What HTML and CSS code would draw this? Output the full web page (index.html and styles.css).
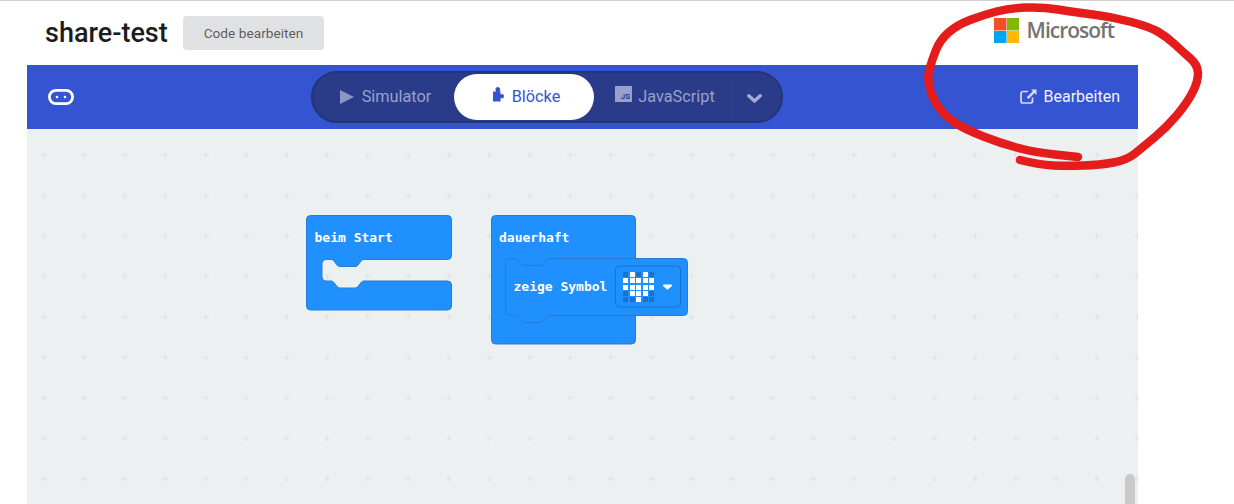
FILE: index.html
```html
<!DOCTYPE html>
<html lang="de">
<head>
<meta charset="utf-8">
<title>share-test</title>
<link rel="stylesheet" href="styles.css">
</head>
<body>
<div class="page">
  <header class="top">
    <h1 class="title">share-test</h1>
    <button class="edit-code">Code bearbeiten</button>
    <div class="ms">
      <svg class="ms-logo" viewBox="0 0 25 25" aria-hidden="true">
        <rect width="12.500" height="12.500" fill="#f25022"/>
        <rect x="13" width="12" height="12.500" fill="#7fba00"/>
        <rect y="13" width="12.500" height="12" fill="#00a4ef"/>
        <rect x="13" y="13" width="12" height="12" fill="#ffb900"/>
      </svg>
      <span class="ms-name">Microsoft</span>
    </div>
  </header>
  <nav class="bar">
    <svg class="board" viewBox="0 0 26 16" aria-hidden="true">
      <rect x="1.400" y="1.400" width="23.200" height="13.200" rx="6.600" fill="none" stroke="#fff" stroke-width="2.800"/>
      <circle cx="9" cy="8" r="1.300" fill="#fff"/>
      <circle cx="17" cy="8" r="1.300" fill="#fff"/>
    </svg>
    <div class="toggle">
      <div class="seg">
        <svg class="ic-play" viewBox="0 0 14 14" aria-hidden="true"><path d="M0 0L14 7L0 14Z"/></svg>
        <span>Simulator</span>
      </div>
      <div class="seg seg-on">
        <svg class="ic-puzzle" viewBox="0 0 11 15" aria-hidden="true"><path d="M0 4.500H3.200C2.600 3.800 2.400 3.200 2.400 2.500C2.400 1 3.500 0 4.800 0C6.100 0 7.200 1 7.200 2.500C7.200 3.200 7 3.800 6.400 4.500H7.600V7.600C8 7.200 8.600 7 9 7C10.200 7 11 8 11 9.200C11 10.400 10.200 11.400 9 11.400C8.600 11.400 8 11.200 7.600 10.800V14.400H0Z"/></svg>
        <span>Blöcke</span>
      </div>
      <div class="seg seg-js">
        <span class="ic-js">JS</span>
        <span>JavaScript</span>
      </div>
      <div class="more">
        <svg class="ic-chev" viewBox="0 0 15 9" aria-hidden="true"><path d="M1.800 1.800L7.500 7L13.200 1.800" fill="none" stroke-width="3.400" stroke-linecap="round" stroke-linejoin="round"/></svg>
      </div>
    </div>
    <a class="share">
      <svg class="ic-ext" viewBox="0 0 17 15" aria-hidden="true">
        <path d="M8 2.500H3A2 2 0 0 0 1 4.500V12A2 2 0 0 0 3 14H10.500A2 2 0 0 0 12.500 12V8.500" fill="none" stroke-width="1.700"/>
        <path d="M11 0.500H16.500V6L14.500 4L8.500 10L6.800 8.300L12.800 2.300Z" class="ext-arrow"/>
      </svg>
      <span>Bearbeiten</span>
    </a>
  </nav>
  <main class="work">
    <svg class="canvas" viewBox="27 129 1111 375">
      <defs>
        <pattern id="grid" patternUnits="userSpaceOnUse" x="-17" y="13.250" width="40.500" height="40.500">
          <path d="M17.250 20.250h6M20.250 17.250v6" stroke="#dde1e2" stroke-width="1" fill="none"/>
        </pattern>
      </defs>
      <rect x="27" y="129" width="1111" height="375" fill="url(#grid)"/>

      <path class="blk" d="M306.500 219.500a4 4 0 0 1 4-4H447.500a4 4 0 0 1 4 4V255.500a4 4 0 0 1-4 4H364q-1.500 0-2.500 1l-3.500 4.500q-1.500 1.500-3 1.500H340q-1.500 0-3-1.500l-3.500-4.500q-1-1-2.500-1H326a4 4 0 0 0-4 4V277a4 4 0 0 0 4 4H331q1.500 0 2.500 1l3.500 4.500q1.500 1.500 3 1.500H355q1.500 0 3-1.500l3.500-4.500q1-1 2.500-1H447.500a4 4 0 0 1 4 4V306a4 4 0 0 1-4 4H310.500a4 4 0 0 1-4-4Z"/>
      <text class="blk-text" x="314.500" y="242">beim Start</text>

      <rect class="blk" x="491.500" y="215.500" width="144" height="128.500" rx="4"/>
      <text class="blk-text" x="499" y="242">dauerhaft</text>

      <path class="blk" d="M505.500 262.500a4 4 0 0 1 4-4H515q1.500 0 2.500 1l3.500 4.500q1.500 1.500 3 1.500H540q1.500 0 3-1.500l3.500-4.500q1-1 2.500-1H683.500a4 4 0 0 1 4 4V311.500a4 4 0 0 1-4 4H549q-1.500 0-2.500 1l-3.500 4.500q-1.500 1.500-3 1.500H525q-1.500 0-3-1.500l-3.500-4.500q-1-1-2.500-1H509.500a4 4 0 0 1-4-4Z"/>
      <text class="blk-text" x="513.500" y="291">zeige Symbol</text>

      <rect class="field" x="615.500" y="266" width="65" height="41" rx="4"/>
      <g class="led-off">
        <rect x="623" y="272" width="5" height="5"/><rect x="636" y="272" width="5" height="5"/><rect x="649" y="272" width="5" height="5"/>
        <rect x="623" y="291" width="5" height="5"/><rect x="649" y="291" width="5" height="5"/>
        <rect x="623" y="297" width="5" height="5"/><rect x="630" y="297" width="5" height="5"/><rect x="643" y="297" width="5" height="5"/><rect x="649" y="297" width="5" height="5"/>
      </g>
      <g class="led-on">
        <rect x="630" y="272" width="5" height="5"/><rect x="643" y="272" width="5" height="5"/>
        <rect x="623" y="278" width="5" height="5"/><rect x="630" y="278" width="5" height="5"/><rect x="636" y="278" width="5" height="5"/><rect x="643" y="278" width="5" height="5"/><rect x="649" y="278" width="5" height="5"/>
        <rect x="623" y="285" width="5" height="5"/><rect x="630" y="285" width="5" height="5"/><rect x="636" y="285" width="5" height="5"/><rect x="643" y="285" width="5" height="5"/><rect x="649" y="285" width="5" height="5"/>
        <rect x="630" y="291" width="5" height="5"/><rect x="636" y="291" width="5" height="5"/><rect x="643" y="291" width="5" height="5"/>
        <rect x="636" y="297" width="5" height="5"/>
      </g>
      <path class="caret" d="M664 285.500H671L667.500 288.500Z"/>
    </svg>
    <div class="thumb"></div>
  </main>
  <svg class="scribble" viewBox="0 0 1234 504" aria-hidden="true">
    <path d="M1078 157L1055 154.500Q1033 152 1016.500 147.500Q1000 143 983.500 136.500Q967 130 957 124Q947 118 940 109Q933 100 930 89Q927 78 929.500 69Q932 60 936 50Q940 40 948.500 32.500Q957 25 970 20Q983 15 996.500 11.500Q1010 8 1026.500 7.500Q1043 7 1058 9.500Q1073 12 1093 14.500Q1113 17 1131.500 22Q1150 27 1158.500 32Q1167 37 1175 44.500Q1183 52 1190.500 58.500Q1198 65 1198 73.500Q1198 82 1192.500 92.500Q1187 103 1177 115Q1167 127 1155 137Q1143 147 1135 153.500Q1127 160 1113.500 162.500Q1100 165 1083.500 165.500Q1067 166 1053.500 165.500Q1040 165 1020 160"/>
  </svg>
</div>
</body>
</html>
```
FILE: styles.css
```css
* { box-sizing: border-box; }
html, body { margin: 0; height: 100%; background: #fff; overflow: hidden; }
body { font-family: Roboto, "Liberation Sans", sans-serif; }

.page {
  position: relative;
  width: 1234px;
  height: 504px;
  border-top: 1px solid #d0d0d0;
  overflow: hidden;
}

.top {
  display: flex;
  align-items: center;
  height: 64px;
  padding: 0 120px 0 45px;
}
.title {
  width: 122px;
  margin: 0 16px 0 0;
  font-size: 27px;
  font-weight: 500;
  color: #1b1c1d;
  line-height: 34px;
  white-space: nowrap;
}
.edit-code {
  width: 141px;
  height: 34px;
  margin-bottom: 1px;
  border: 0;
  border-radius: 4px;
  background: #e0e1e2;
  color: rgba(0, 0, 0, .62);
  font: 400 13.700px Roboto, sans-serif;
}
.ms {
  display: flex;
  align-items: center;
  gap: 8px;
  margin-left: auto;
  margin-bottom: 6px;
}
.ms-logo { width: 25px; height: 25px; display: block; }
.ms-name {
  font: 600 21px/25px "Open Sans", sans-serif;
  letter-spacing: -1px;
  color: #737373;
  padding-top: 1px;
}

.bar {
  display: flex;
  align-items: center;
  height: 64px;
  width: 1111px;
  margin-left: 27px;
  padding: 0 18px 0 21px;
  background: #3454d1;
}
.board { width: 26px; height: 16px; display: block; }
.toggle {
  display: flex;
  align-items: center;
  width: 472px;
  height: 52px;
  margin-left: 237px;
  padding: 1px;
  border: 2px solid #243578;
  border-radius: 26px;
  background: #2a3b8a;
}
.seg {
  display: flex;
  align-items: center;
  justify-content: center;
  gap: 8px;
  width: 140px;
  height: 46px;
  padding: 0 0 2px 3px;
  font-size: 16.300px;
  color: #98a1cb;
}
.seg-on {
  padding-left: 5px;
  border-radius: 23px;
  background: #fff;
  color: #3454d1;
}
.seg-js {
  gap: 6px;
  padding-left: 5px;
}
.ic-play { width: 14px; height: 14px; fill: #8d97c5; margin-top: 1px; }
.ic-puzzle { width: 11px; height: 15px; margin-top: -4px; fill: #3454d1; }
.ic-js {
  display: flex;
  align-items: flex-end;
  justify-content: flex-end;
  width: 17px;
  height: 16px;
  margin: -4px 0 0 -3px;
  padding: 0 2px 1px 0;
  background: #98a1cb;
  color: #2a3b8a;
  font: 700 8px/8px Roboto, sans-serif;
}
.more {
  display: flex;
  align-items: center;
  justify-content: center;
  flex: 1;
  height: 46px;
  border-left: 1px solid #283880;
  padding: 3px 7px 0 0;
}
.ic-chev { width: 15px; height: 9px; stroke: #a4acd3; }
.share {
  display: flex;
  align-items: center;
  gap: 7px;
  margin-left: auto;
  padding-bottom: 2px;
  font-size: 16px;
  color: #f1f3fb;
}
.ic-ext { width: 17px; height: 15px; stroke: #d6dcf3; }
.ext-arrow { fill: #d6dcf3; stroke: none; }

.work {
  position: relative;
  width: 1111px;
  height: 375px;
  margin-left: 27px;
  background: #ecf0f1;
}
.canvas { display: block; width: 1111px; height: 375px; }
.blk { fill: #2190ff; stroke: #2a7cd0; stroke-width: 1; }
.blk-text {
  font: 700 13px "DejaVu Sans Mono", monospace;
  fill: #fff;
}
.field { fill: #2190ff; stroke: #1873cc; stroke-width: 1; }
.led-off { fill: #1873cc; }
.led-on { fill: #fff; }
.caret { fill: #fff; stroke: #fff; stroke-width: 2; stroke-linejoin: round; }
.thumb {
  position: absolute;
  left: 1098px;
  top: 345px;
  width: 10px;
  height: 40px;
  border-radius: 5px 5px 0 0;
  background: #c9c9c9;
}

.scribble {
  position: absolute;
  left: 0;
  top: -1px;
  width: 1234px;
  height: 504px;
  fill: none;
  stroke: #e41c1c;
  stroke-width: 8.500;
  stroke-linecap: round;
  stroke-linejoin: round;
  pointer-events: none;
}
```
